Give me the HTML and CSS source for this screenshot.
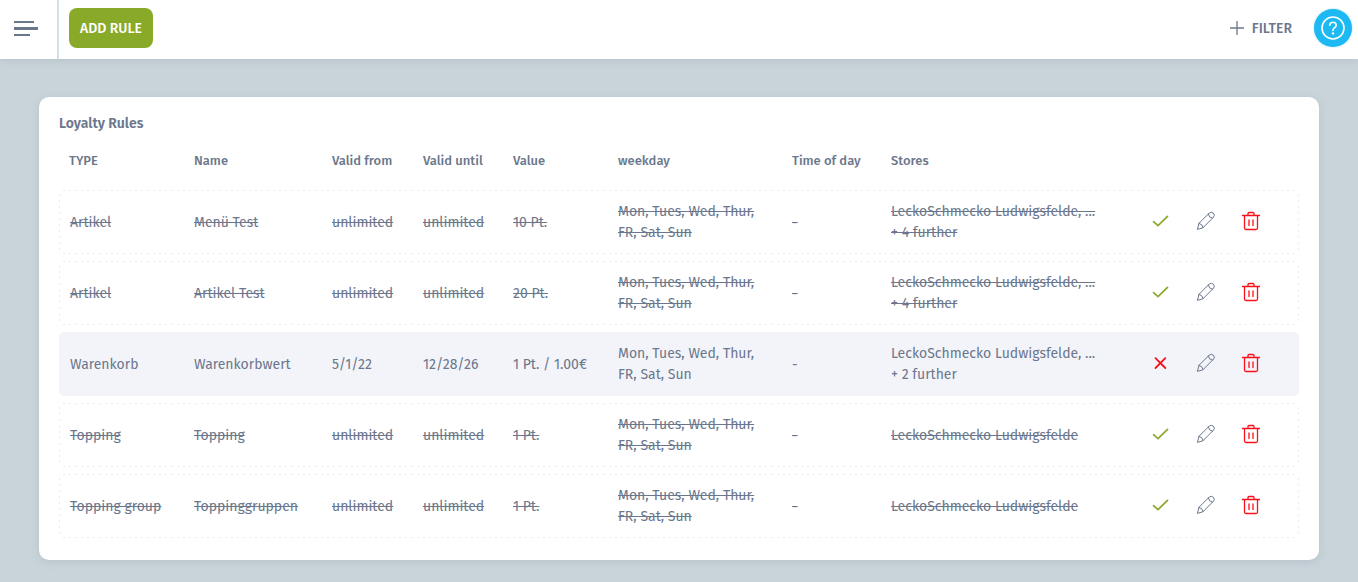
FILE: index.html
```
<!DOCTYPE html>
<html lang="en">
<head>
<meta charset="utf-8">
<meta name="viewport" content="width=device-width,initial-scale=1">
<title>Loyalty Rules</title>
<link rel="stylesheet" href="styles.css">
</head>
<body>

<!-- icons used by the rows -->
<svg class="sprite" aria-hidden="true">
  <symbol id="i-check" viewBox="0 0 20 20"><path d="M2.500 10.700 7 14.700 16.500 5.300" stroke-width="1.700"/></symbol>
  <symbol id="i-cross" viewBox="0 0 20 20"><path d="M4.500 5.200 14.300 15M14.300 5.200 4.500 15" stroke-width="1.800"/></symbol>
  <symbol id="i-pencil" viewBox="0 0 20 20"><path d="M1.500 18 3 12.300 13.300 2Q15.300.500 17.400 2.200 19.300 4.200 17.500 6.200L7.200 16.500ZM3 12.300Q6.500 13 7.200 16.500M12.300 3Q12.600 6.800 16.500 7.200"/></symbol>
  <symbol id="i-trash" viewBox="0 0 20 20"><path d="M1.500 4.500H18.500M3.500 4.500V17Q3.500 18.500 5 18.500H15Q16.500 18.500 16.500 17V4.500M7 4.500V2.500Q7 1.500 8 1.500H12Q13 1.500 13 2.500V4.500M8 9V14.500M12 9V14.500" stroke-width="1.300"/></symbol>
</svg>

<header class="topbar">
  <button class="menu-btn" type="button" aria-label="Menu"><span></span><span></span><span></span></button>
  <div class="toolbar">
    <button class="btn-add" type="button">ADD RULE</button>
    <button class="btn-filter" type="button">
      <svg viewBox="0 0 14 14" aria-hidden="true"><path d="M7 .5V13.500M.5 7H13.500"/></svg>
      FILTER
    </button>
    <button class="btn-help" type="button" aria-label="Help">
      <svg viewBox="0 0 24 24" aria-hidden="true"><circle cx="12" cy="12" r="11"/><path d="M8.800 9.300Q8.900 6.300 12 6.200 15.200 6.300 15.200 9.200 15.200 10.800 13.500 11.800 12 12.700 12 14.500"/><circle class="point" cx="12" cy="17.400" r="1.200"/></svg>
    </button>
  </div>
</header>

<main class="card">
  <h1>Loyalty Rules</h1>
  <table class="rules">
    <colgroup>
      <col class="c-type"><col class="c-name"><col class="c-from"><col class="c-until"><col class="c-value"><col class="c-week"><col class="c-time"><col><col class="c-icon"><col class="c-icon"><col class="c-last">
    </colgroup>
    <thead>
      <tr>
        <th>TYPE</th><th>Name</th><th>Valid from</th><th>Valid until</th><th>Value</th><th>weekday</th><th>Time of day</th><th>Stores</th><td></td><td></td><td></td>
      </tr>
    </thead>
    <tbody>
      <tr class="off">
        <td>Artikel</td><td>Menü Test</td><td>unlimited</td><td>unlimited</td><td>10 Pt.</td><td>Mon, Tues, Wed, Thur, FR, Sat, Sun</td><td>-</td><td>LeckoSchmecko Ludwigsfelde, ...<br>+ 4 further</td>
        <td><button class="icon green" type="button" aria-label="Activate"><svg><use href="#i-check"/></svg></button></td>
        <td><button class="icon" type="button" aria-label="Edit"><svg><use href="#i-pencil"/></svg></button></td>
        <td><button class="icon red" type="button" aria-label="Delete"><svg><use href="#i-trash"/></svg></button></td>
      </tr>
      <tr class="off">
        <td>Artikel</td><td>Artikel Test</td><td>unlimited</td><td>unlimited</td><td>20 Pt.</td><td>Mon, Tues, Wed, Thur, FR, Sat, Sun</td><td>-</td><td>LeckoSchmecko Ludwigsfelde, ...<br>+ 4 further</td>
        <td><button class="icon green" type="button" aria-label="Activate"><svg><use href="#i-check"/></svg></button></td>
        <td><button class="icon" type="button" aria-label="Edit"><svg><use href="#i-pencil"/></svg></button></td>
        <td><button class="icon red" type="button" aria-label="Delete"><svg><use href="#i-trash"/></svg></button></td>
      </tr>
      <tr class="on">
        <td>Warenkorb</td><td>Warenkorbwert</td><td>5/1/22</td><td>12/28/26</td><td>1 Pt. / 1.00€</td><td>Mon, Tues, Wed, Thur, FR, Sat, Sun</td><td>-</td><td>LeckoSchmecko Ludwigsfelde, ...<br>+ 2 further</td>
        <td><button class="icon red" type="button" aria-label="Deactivate"><svg><use href="#i-cross"/></svg></button></td>
        <td><button class="icon" type="button" aria-label="Edit"><svg><use href="#i-pencil"/></svg></button></td>
        <td><button class="icon red" type="button" aria-label="Delete"><svg><use href="#i-trash"/></svg></button></td>
      </tr>
      <tr class="off">
        <td>Topping</td><td>Topping</td><td>unlimited</td><td>unlimited</td><td>1 Pt.</td><td>Mon, Tues, Wed, Thur, FR, Sat, Sun</td><td>-</td><td>LeckoSchmecko Ludwigsfelde</td>
        <td><button class="icon green" type="button" aria-label="Activate"><svg><use href="#i-check"/></svg></button></td>
        <td><button class="icon" type="button" aria-label="Edit"><svg><use href="#i-pencil"/></svg></button></td>
        <td><button class="icon red" type="button" aria-label="Delete"><svg><use href="#i-trash"/></svg></button></td>
      </tr>
      <tr class="off">
        <td>Topping group</td><td>Toppinggruppen</td><td>unlimited</td><td>unlimited</td><td>1 Pt.</td><td>Mon, Tues, Wed, Thur, FR, Sat, Sun</td><td>-</td><td>LeckoSchmecko Ludwigsfelde</td>
        <td><button class="icon green" type="button" aria-label="Activate"><svg><use href="#i-check"/></svg></button></td>
        <td><button class="icon" type="button" aria-label="Edit"><svg><use href="#i-pencil"/></svg></button></td>
        <td><button class="icon red" type="button" aria-label="Delete"><svg><use href="#i-trash"/></svg></button></td>
      </tr>
    </tbody>
  </table>
</main>

</body>
</html>
```
FILE: styles.css
```
*{box-sizing:border-box;}
body{margin:0;background:#c9d4da;color:#6b778c;font:14px/21px "Fira Sans","Noto Sans",sans-serif;}
button{font:inherit;color:inherit;background:none;border:0;padding:0;cursor:pointer;}
svg{fill:none;stroke:currentColor;stroke-linecap:round;stroke-linejoin:round;display:block;}
.sprite{display:none;}

/* top bar */
.topbar{display:flex;height:59px;background:#fff;box-shadow:0 2px 8px rgba(80,100,115,.15);}
.menu-btn{width:59px;padding:0 14px 2px;border-right:2px solid #d3dfe6;display:flex;flex-direction:column;justify-content:center;gap:4px;}
.menu-btn span{height:2px;width:20px;background:#6b778c;}
.menu-btn span:nth-child(2){height:3px;width:24px;}
.menu-btn span:nth-child(3){width:16px;}
.toolbar{flex:1;display:flex;align-items:center;padding:0 6px 3px 10px;}
.btn-add{height:40px;padding:0 11px;border-radius:8px;background:#89aa29;color:#fff;font-weight:500;}
.btn-filter{display:flex;align-items:center;gap:8px;margin-left:auto;margin-right:22px;font-weight:500;}
.btn-filter svg{width:14px;height:14px;stroke-width:1.3;}
.btn-help{width:38px;height:38px;border-radius:50%;background:#1cb9f2;color:#fff;display:flex;align-items:center;justify-content:center;box-shadow:0 0 2px rgba(28,185,242,.5);}
.btn-help svg{width:24px;height:24px;stroke-width:1.6;}
.btn-help .point{fill:currentColor;stroke:none;}

/* card */
.card{margin:38px 39px 22px;padding:16px 20px 15px;background:#fff;border-radius:10px;box-shadow:0 2px 8px rgba(80,100,115,.15);}
h1{margin:0;font-size:14px;line-height:21px;font-weight:600;}

/* table */
.rules{width:100%;table-layout:fixed;border-collapse:separate;border-spacing:0 7px;}
.c-type{width:125px;}
.c-name{width:138px;}
.c-from{width:91px;}
.c-until{width:90px;}
.c-value{width:105px;}
.c-week{width:174px;}
.c-time{width:99px;}
.c-icon{width:45px;}
.c-last{width:71px;}
th{padding:9px 0 12px 10px;text-align:left;font-size:13px;font-weight:500;white-space:nowrap;}
tbody td{height:64px;padding:0 10px;}
tbody td:first-child{padding-left:11px;border-radius:5px 0 0 5px;}
tbody td:last-child{border-radius:0 5px 5px 0;}
.off td{text-decoration:line-through;}
/* dashes run over the whole row, not cell by cell */
.off{
  --dash:#ebebef 0 2px,transparent 2px 6px;
  background:
    repeating-linear-gradient(90deg,var(--dash)) center top/calc(100% - 8px) 1px no-repeat,
    repeating-linear-gradient(90deg,var(--dash)) center bottom/calc(100% - 8px) 1px no-repeat,
    repeating-linear-gradient(var(--dash)) left center/1px calc(100% - 8px) no-repeat,
    repeating-linear-gradient(var(--dash)) right center/1px calc(100% - 8px) no-repeat;
}
.on td{background:#f3f4f9;}

.icon{display:flex;align-items:center;justify-content:center;width:25px;height:24px;margin-bottom:2px;}
.icon svg{width:20px;height:20px;}
.green{color:#89aa29;}
.red{color:#fb1019;}
```
